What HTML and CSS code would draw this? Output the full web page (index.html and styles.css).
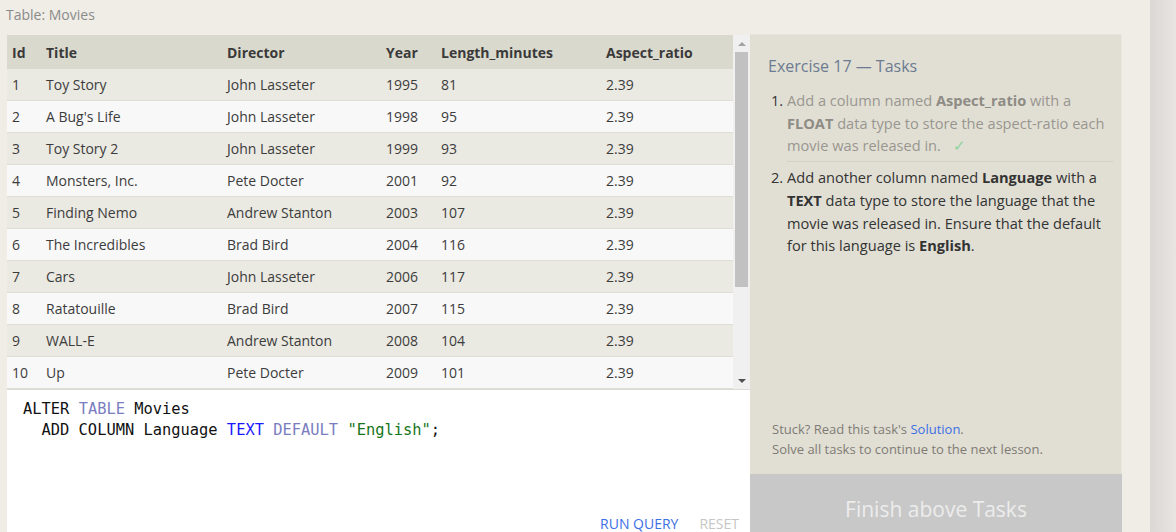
FILE: index.html
```html
<!DOCTYPE html>
<html>
<head>
<meta charset="utf-8">
<link rel="stylesheet" href="styles.css">
</head>
<body>
<div class="wrap">
  <div class="left">
    <div class="caption">Table: Movies</div>
    <div class="table-box">
      <div class="table-scroll">
        <table class="data">
          <thead>
            <tr><th class="c-id">Id</th><th class="c-title">Title</th><th class="c-dir">Director</th><th class="c-year">Year</th><th class="c-len">Length_minutes</th><th class="c-ar">Aspect_ratio</th></tr>
          </thead>
          <tbody>
            <tr><td>1</td><td>Toy Story</td><td>John Lasseter</td><td>1995</td><td>81</td><td>2.39</td></tr>
            <tr><td>2</td><td>A Bug's Life</td><td>John Lasseter</td><td>1998</td><td>95</td><td>2.39</td></tr>
            <tr><td>3</td><td>Toy Story 2</td><td>John Lasseter</td><td>1999</td><td>93</td><td>2.39</td></tr>
            <tr><td>4</td><td>Monsters, Inc.</td><td>Pete Docter</td><td>2001</td><td>92</td><td>2.39</td></tr>
            <tr><td>5</td><td>Finding Nemo</td><td>Andrew Stanton</td><td>2003</td><td>107</td><td>2.39</td></tr>
            <tr><td>6</td><td>The Incredibles</td><td>Brad Bird</td><td>2004</td><td>116</td><td>2.39</td></tr>
            <tr><td>7</td><td>Cars</td><td>John Lasseter</td><td>2006</td><td>117</td><td>2.39</td></tr>
            <tr><td>8</td><td>Ratatouille</td><td>Brad Bird</td><td>2007</td><td>115</td><td>2.39</td></tr>
            <tr><td>9</td><td>WALL-E</td><td>Andrew Stanton</td><td>2008</td><td>104</td><td>2.39</td></tr>
            <tr><td>10</td><td>Up</td><td>Pete Docter</td><td>2009</td><td>101</td><td>2.39</td></tr>
            <tr><td>11</td><td>Toy Story 3</td><td>Lee Unkrich</td><td>2010</td><td>103</td><td>2.39</td></tr>
            <tr><td>12</td><td>Cars 2</td><td>John Lasseter</td><td>2011</td><td>120</td><td>2.39</td></tr>
            <tr><td>13</td><td>Brave</td><td>Brenda Chapman</td><td>2012</td><td>102</td><td>2.39</td></tr>
            <tr><td>14</td><td>Monsters University</td><td>Dan Scanlon</td><td>2013</td><td>110</td><td>2.39</td></tr>
          </tbody>
        </table>
      </div>
      <div class="vscroll">
        <div class="arrow-up"></div>
        <div class="thumb-track"><div class="thumb"></div></div>
        <div class="arrow-down"></div>
      </div>
    </div>
    <div class="editor">
      <pre class="code"><span class="kw">ALTER</span> <span class="kw2">TABLE</span> Movies
  ADD COLUMN Language <span class="type">TEXT</span> <span class="kw2">DEFAULT</span> <span class="str">"English"</span>;</pre>
      <div class="actions">
        <span class="run">RUN QUERY</span>
        <span class="reset">RESET</span>
      </div>
    </div>
  </div>
  <div class="side">
    <div class="panel">
      <div class="panel-top">
        <h2 class="ex-title">Exercise 17 — Tasks</h2>
        <ol class="tasks">
          <li class="done">Add a column named <b>Aspect_ratio</b> with a <b>FLOAT</b> data type to store the aspect-ratio each movie was released in. <span class="check">✓</span></li>
          <li class="todo">Add another column named <b>Language</b> with a <b>TEXT</b> data type to store the language that the movie was released in. Ensure that the default for this language is <b>English</b>.</li>
        </ol>
      </div>
      <div class="hint">
        <div>Stuck? Read this task's <span class="link">Solution</span>.</div>
        <div>Solve all tasks to continue to the next lesson.</div>
      </div>
    </div>
    <div class="finish">Finish above Tasks</div>
  </div>
  <div class="gap"></div>
  <div class="edge"></div>
</div>
</body>
</html>
```

FILE: styles.css
```css
html, body {
  margin: 0;
  padding: 0;
  height: 532px;
  overflow: hidden;
}
body {
  background: #f0ede6;
  font-family: "Open Sans", "Noto Sans", sans-serif;
  color: #333;
}
.wrap {
  display: flex;
  height: 532px;
  align-items: flex-start;
}
.left {
  width: 743px;
  margin-left: 7px;
  display: flex;
  flex-direction: column;
  flex-shrink: 0;
}
.caption {
  flex-shrink: 0;
  height: 35px;
  box-sizing: border-box;
  padding-top: 5px;
  margin-left: -1px;
  font-size: 14px;
  line-height: 20px;
  color: #8a8a8a;
}
.table-box {
  flex-shrink: 0;
  height: 354px;
  display: flex;
  border-bottom: 1px solid #dddbd5;
}
.table-scroll {
  width: 726px;
  overflow: hidden;
}
.data {
  width: 726px;
  border-collapse: collapse;
  table-layout: fixed;
  font-size: 14px;
}
.data th, .data td {
  text-align: left;
  padding: 0 0 0 5px;
  white-space: nowrap;
}
.data th {
  height: 34px;
  background: #dad9cd;
  font-weight: 700;
  color: #3a3a3a;
}
.data td {
  height: 31px;
  border-bottom: 1px solid #deddd6;
  color: #3c3c3c;
}
.data tbody tr:nth-child(odd) td { background: #eae9e2; }
.data tbody tr:nth-child(even) td { background: #f8f8f8; }
.c-id { width: 29px; }
.c-title { width: 176px; }
.c-dir { width: 154px; }
.c-year { width: 50px; }
.c-len { width: 160px; }
.c-ar { width: 127px; }
.vscroll {
  width: 17px;
  background: #f0f0f0;
  display: flex;
  flex-direction: column;
  align-items: center;
}
.arrow-up, .arrow-down {
  height: 17px;
  width: 17px;
  display: flex;
  align-items: center;
  justify-content: center;
}
.arrow-up::after {
  content: "";
  border-left: 4px solid transparent;
  border-right: 4px solid transparent;
  border-bottom: 4px solid #a3a3a3;
}
.arrow-down::after {
  content: "";
  border-left: 4px solid transparent;
  border-right: 4px solid transparent;
  border-top: 4px solid #505050;
}
.thumb-track {
  flex: 1;
  width: 17px;
  display: flex;
  justify-content: center;
}
.thumb {
  width: 13px;
  height: 235px;
  background: #c1c1c1;
}
.editor {
  flex-shrink: 0;
  background: #ffffff;
  height: 160px;
  display: flex;
  flex-direction: column;
}
.code {
  margin: 0;
  padding: 9px 0 0 16px;
  font-family: "DejaVu Sans Mono", "Liberation Mono", monospace;
  font-size: 15.4px;
  line-height: 21px;
  color: #111;
  height: 115px;
}
.kw { color: #111; }
.kw2 { color: #7a7dc0; }
.type { color: #1a1aff; }
.str { color: #17751a; }
.actions {
  display: flex;
  justify-content: flex-end;
  gap: 21px;
  padding-right: 11px;
  font-size: 14px;
  line-height: 20px;
}
.run { color: #3c6fe6; }
.reset { color: #c6c6c6; }
.side {
  flex-shrink: 0;
  width: 372px;
  margin-top: 34px;
  display: flex;
  flex-direction: column;
}
.panel {
  flex-shrink: 0;
  height: 440px;
  background: #e1dfd4;
  box-sizing: border-box;
  display: flex;
  flex-direction: column;
  justify-content: space-between;
  border-right: 1px solid #e9e7de;
  border-top: 1px solid #e7e5dc;
}
.panel-top {
  padding: 0 8px 0 18px;
}
.ex-title {
  margin: 19px 0 0 0;
  font-size: 16px;
  font-weight: 400;
  line-height: 24px;
  color: #6c7b91;
}
.tasks {
  margin: 11px 0 0 0;
  padding-left: 19px;
  font-size: 14.6px;
  line-height: 22.7px;
}
.tasks li.done {
  color: #999690;
  padding-bottom: 4px;
  border-bottom: 1px solid #d3d1c7;
}
.tasks li.done::marker { color: #333; }
.tasks li.done b { color: #8e8b85; }
.tasks li.todo {
  color: #333;
  padding-top: 4px;
}
.tasks b { font-weight: 700; }
.check {
  color: #8fd19e;
  margin-left: 8px;
}
.hint {
  padding: 0 0 15px 22px;
  font-size: 13px;
  line-height: 20px;
  color: #7f7b74;
}
.link { color: #3c6fe6; }
.finish {
  flex-shrink: 0;
  height: 80px;
  background: #c8c8c8;
  color: #ececec;
  font-size: 21px;
  font-weight: 400;
  line-height: 30px;
  text-align: center;
  padding-top: 20px;
  box-sizing: border-box;
}
.gap {
  flex-shrink: 0;
  width: 28px;
}
.edge {
  flex-shrink: 0;
  width: 26px;
  height: 532px;
  background: linear-gradient(to right, #dbd7d5, #e8e5e3);
}
```
